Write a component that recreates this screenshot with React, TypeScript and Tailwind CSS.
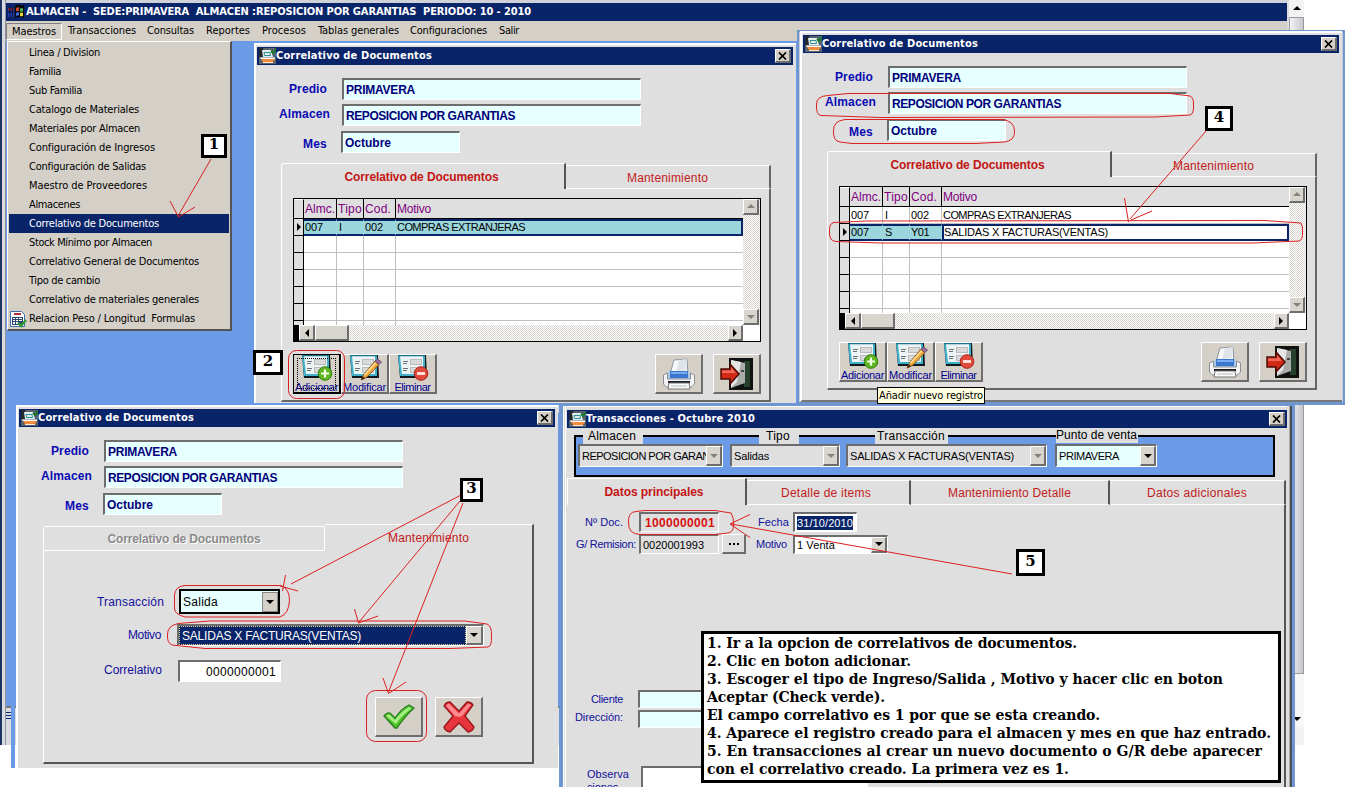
import { useLayoutEffect, useRef, type ReactNode } from "react";

/* Caption whose letter spacing is adjusted so that it spans a given width. */
function Fit({ w, className = "", children }: { w: number; className?: string; children: string }) {
  const ref = useRef<HTMLSpanElement>(null);
  useLayoutEffect(() => {
    const el = ref.current;
    if (!el) return;
    el.style.letterSpacing = "0px";
    const natural = el.getBoundingClientRect().width;
    el.style.letterSpacing = `${(w - natural) / children.length}px`;
  }, [w, children]);
  return (
    <span ref={ref} className={`inline-block shrink-0 whitespace-pre ${className}`}>
      {children}
    </span>
  );
}

const tahoma = "font-['DejaVu_Sans_Condensed','DejaVu_Sans',sans-serif]";
const arial = "font-['Liberation_Sans',Arial,sans-serif]";
const sunken = "border-t-2 border-l-2 border-b border-r border-t-[#6d6d6d] border-l-[#6d6d6d] border-b-white border-r-white";
const raised = "border-t border-l border-b-2 border-r-2 border-t-white border-l-white border-b-[#6d6d6d] border-r-[#6d6d6d]";
const dither = "bg-[repeating-conic-gradient(#ffffff_0_25%,#d8d5cf_0_50%)] bg-[length:2px_2px]";

/* ---------- icons ---------- */

function FormIcon() {
  return (
    <svg width="17" height="16" viewBox="0 0 17 16" className="shrink-0">
      <rect width="17" height="16" fill="#59616a" />
      <path d="M0 0h4l2 9H0z" fill="#23282e" />
      <path d="M3 2h9l2 7H4z" fill="#e3efee" />
      <path d="M5 4.500h6l.5 3h-6z" fill="none" stroke="#2d8f8f" />
      <path d="M12 3l2 2 3-4" stroke="#177a2b" strokeWidth="2" fill="none" />
      <path d="M1 9.500h15v1.500H2z" fill="#fff" />
      <path d="M2 11h14l-2 3H4z" fill="#f08a3c" />
      <path d="M4 14h10v1H4z" fill="#fbe9d8" />
    </svg>
  );
}

function FlagIcon() {
  return (
    <svg width="17" height="16" viewBox="0 0 17 16" className="shrink-0">
      <path d="M7 2q2-2 5-1 2 1 4 0v12q-2 1-4 0-3-1-5 1z" fill="#07070d" />
      <path d="M8 4q2-1 3-.5v3.500q-1-.5-3 .5z" fill="#d8452e" />
      <path d="M12 4q2 .7 3 0v3.500q-1 .5-3 0z" fill="#4fae45" />
      <path d="M8 9q2-1 3-.5v3q-1-.5-3 .5z" fill="#3b6fe0" />
      <path d="M12 8.500q2 .7 3 0v3.500q-1 .5-3 0z" fill="#e8d53a" />
      <path d="M0 4h6v3H0z" fill="#7b2340" />
      <path d="M0 9h6v4H0z" fill="#2a3fae" />
      <path d="M2 3v11M4.500 3v11" stroke="#0a1440" />
    </svg>
  );
}

function SheetCheckIcon() {
  return (
    <svg width="18" height="18" viewBox="0 0 18 18" className="shrink-0">
      <path d="M.5 1.500h11l3 3v12H.5z" fill="#fff" stroke="#3d6ea8" />
      <path d="M4 3h7v2H4z" fill="#b03030" />
      <path d="M2 7h11v8H2z" fill="#2d4770" />
      <path d="M3 8h2v1H3zM6 8h2v1H6zM9 8h3v1H9zM3 10h2v1H3zM6 10h2v1H6zM9 10h3v1H9zM3 12h2v2H3zM6 12h2v2H6z" fill="#fff" />
      <path d="M8 13l3 3 5-6" stroke="#2f9a35" strokeWidth="2.400" fill="none" />
    </svg>
  );
}

function RecordIcon({ kind }: { kind: "add" | "edit" | "remove" }) {
  return (
    <svg width="34" height="26" viewBox="0 0 34 26" className="shrink-0">
      <path d="M2 0h28l1 23H4z" fill="#10181e" />
      <path d="M2 0h27v21H4z" fill="#3fb0c8" />
      <path d="M4 1h23v18H6z" fill="#edf4f6" />
      <path d="M2 .5h27" stroke="#1b6f8e" strokeWidth="1.500" />
      <rect x="14.500" y="4.500" width="11" height="5" fill="#dadadb" stroke="#bbb" />
      <rect x="14.500" y="12.500" width="11" height="5" fill="#dadadb" stroke="#bbb" />
      <path d="M7 6.500h5M7 8.500h4M7 13.500h5M7 15.500h4" stroke="#6c7276" />
      {kind === "add" && (
        <g>
          <circle cx="25" cy="18.500" r="6.800" fill="#5fb61f" stroke="#2f7d0d" />
          <path d="M25 14.500v8M21 18.500h8" stroke="#f4ffe8" strokeWidth="2.200" />
        </g>
      )}
      {kind === "edit" && (
        <g>
          <path d="M13 25l3-6L27 6l4 3.500L19 22z" fill="#f2a93b" stroke="#7a4a10" strokeWidth=".8" />
          <path d="M16.500 20L27.500 8" stroke="#ffe1a0" strokeWidth="1.500" />
          <path d="M27 6l2.500-2 4 3L31 9.500z" fill="#9a6f9e" stroke="#5c4465" strokeWidth=".8" />
          <path d="M13 25l2-3.500 2 2z" fill="#2b1a0a" />
        </g>
      )}
      {kind === "remove" && (
        <g>
          <circle cx="25" cy="18.500" r="6.800" fill="#e0493c" stroke="#a82419" />
          <path d="M21 18.500h8" stroke="#ffe9e6" strokeWidth="2.800" />
        </g>
      )}
    </svg>
  );
}

function PrinterIcon() {
  return (
    <svg width="34" height="34" viewBox="0 0 34 34">
      <path d="M8 17L12 3l13-1 1 15z" fill="#f6f8fb" stroke="#8e949c" />
      <path d="M17 3l-3 12 10-2 1-11z" fill="#dfe3ea" />
      <path d="M7 14h20l2 9H5z" fill="#a9c8ee" />
      <path d="M8 14h18v7H8z" fill="#3a78d0" />
      <path d="M9 15h16v2H9z" fill="#78aef0" />
      <path d="M1.500 18l4-2v6h23v-6l4 2v9l-3 3h-25l-3-3z" fill="#f4f4f6" stroke="#8a8d94" />
      <path d="M6 24h22v2H6z" fill="#17181c" />
      <path d="M7 26h20l1 6H6z" fill="#fbfbfb" stroke="#777" />
      <path d="M9 29h16" stroke="#bbb" />
    </svg>
  );
}

function ExitIcon() {
  return (
    <svg width="34" height="34" viewBox="0 0 34 34">
      <path d="M9 1h24v32H9z" fill="#10120f" />
      <path d="M24 4h6v26h-6z" fill="#27402c" />
      <path d="M11 3l14 3v20l-14 5z" fill="#a9aca9" />
      <path d="M11 3l10 2-4 20-6 6z" fill="#e4e5e4" />
      <path d="M21 13h3v2h-3z" fill="#444" />
      <path d="M1 12h9V7l9 10-9 10v-5H1z" fill="#d22a17" stroke="#4d0c05" strokeWidth="1.500" />
      <path d="M2 13.500h9V10l5 6H2z" fill="#f0695a" />
    </svg>
  );
}

function CheckIcon() {
  return (
    <svg width="34" height="28" viewBox="0 0 34 28">
      <path d="M2 13q3-4 6-3l5 5q6-9 14-13l5 3Q23 13 15 25h-2z" fill="#4cc22b" stroke="#2b7d1d" strokeWidth="1.300" />
      <path d="M4 13q2-2 3.500-1.500L13 17q7-9 14-13l2.500 1.500Q20 12 14 21z" fill="#a9ee86" />
    </svg>
  );
}

function CrossIcon() {
  return (
    <svg width="34" height="34" viewBox="0 0 34 34">
      <path d="M2 6q2-4 6-4l9 9 8-9q4 0 6 3l-8 11 9 11q-1 4-6 5l-9-9-9 9q-5-1-6-5l9-11z" fill="#e8343c" stroke="#96141b" strokeWidth="1.300" />
      <path d="M4 6q1-2 3-2.500l10 10 9-10q2 0 3 1.500L20 16l-3 1-4-1z" fill="#f98a8d" />
    </svg>
  );
}

function Tri({ dir, dim }: { dir: "up" | "down" | "left" | "right"; dim?: boolean }) {
  const shape = {
    up: "M0 5h8L4 1z",
    down: "M0 2h8L4 6z",
    left: "M6 0v8L2 4z",
    right: "M2 0v8l4-4z",
  }[dir];
  return (
    <svg width="8" height="8" viewBox="0 0 8 8" className="shrink-0">
      <path d={shape} fill={dim ? "#85827c" : "#000"} />
    </svg>
  );
}

/* ---------- shared pieces ---------- */

function TitleBar({ text, w }: { text: string; w: number }) {
  return (
    <div className="flex h-[18px] shrink-0 items-center bg-[#0a246a] pl-[2px] pr-[2px]">
      <FormIcon />
      <Fit w={w} className={`text-[11px] leading-[16px] font-bold text-white ${tahoma}`}>{text}</Fit>
      <div className={`ml-auto flex h-[14px] w-[16px] items-center justify-center bg-[#d4d0c8] ${raised}`}>
        <svg width="9" height="8" viewBox="0 0 9 8">
          <path d="M1 .5l7 7M8 .5l-7 7" stroke="#000" strokeWidth="1.700" />
        </svg>
      </div>
    </div>
  );
}

function HeaderField({ label, lw, cell, value, vw, box }: { label: string; lw: number; cell: string; value: string; vw: number; box: string }) {
  return (
    <div className={`flex h-[22px] items-center ${arial}`}>
      <div className={`flex justify-end ${cell}`}>
        <Fit w={lw} className="text-[12px] leading-[14px] font-bold text-[#0a0ab4]">{label}</Fit>
      </div>
      <div className={`flex h-[22px] items-center bg-[#e6ffff] pl-[2px] ${sunken} ${box}`}>
        <Fit w={vw} className="text-[12px] leading-[14px] font-bold text-[#00007a]">{value}</Fit>
      </div>
    </div>
  );
}

function CorrelativoWindow({ className, children }: { className: string; children: ReactNode }) {
  return (
    <section className={`absolute w-[542px] overflow-hidden border-t-2 border-l-2 border-white bg-[#dfdfdf] pt-[2px] pl-px ${className}`}>
      <div className="w-[536px]">
        <TitleBar text="Correlativo de Documentos" w={156} />
      </div>
      <div className="mt-[13px] flex flex-col">
        <HeaderField label="Predio" lw={38} cell="w-[85px] pr-[15px]" value="PRIMAVERA" vw={69} box="w-[299px]" />
        <div className="mt-[4px]">
          <HeaderField label="Almacen" lw={51} cell="w-[85px] pr-[12px] pb-[3px]" value="REPOSICION POR GARANTIAS" vw={169} box="w-[299px]" />
        </div>
        <div className="mt-[5px]">
          <HeaderField label="Mes" lw={24} cell="w-[84px] pr-[14px] pt-[3px]" value="Octubre" vw={46} box="w-[119px]" />
        </div>
      </div>
      {children}
    </section>
  );
}

type Row = { almc: string; tipo: string; cod: string; motivo: string };

function ScrollButton({ dir, dim, className }: { dir: "up" | "down" | "left" | "right"; dim?: boolean; className: string }) {
  return (
    <div className={`flex shrink-0 items-center justify-center bg-[#d8d5cf] ${raised} ${className}`}>
      <Tri dir={dir} dim={dim} />
    </div>
  );
}

function GridTable({ rows, editing }: { rows: Row[]; editing?: boolean }) {
  const current = rows.length - 1;
  const all: (Row | null)[] = [...rows, ...Array<null>(7 - rows.length).fill(null)];
  const head = "flex h-full items-center border-r border-black pl-px";
  return (
    <div className={`flex h-[144px] w-[468px] flex-col border border-black bg-white ${arial}`}>
      <div className="flex h-[126px]">
        <div className="flex w-[449px] flex-col overflow-hidden">
          <div className="flex h-[20px] shrink-0 border-b border-black bg-[#dfdfdf] text-[12px] leading-[14px] text-[#800080]">
            <div className="w-[10px] border-t border-r border-t-white border-r-black" />
            <div className={`w-[33px] ${head}`}><Fit w={30}>Almc.</Fit></div>
            <div className={`w-[27px] ${head}`}><Fit w={24}>Tipo</Fit></div>
            <div className={`w-[32px] ${head}`}><Fit w={26}>Cod.</Fit></div>
            <div className="flex flex-1 items-center pl-px"><Fit w={34}>Motivo</Fit></div>
          </div>
          {all.map((row, i) => {
            const on = i === current;
            const tint = on ? "border-y-2 border-y-[#0a246a] bg-[#9bd6dc]" : "border-b border-b-[#c0c0c0]";
            const cell = `flex items-center border-r pl-px ${on ? "border-r-[#9bd6dc]" : "border-r-[#c0c0c0]"} ${tint}`;
            const wide = on && editing ? "border-2 border-[#0a246a] bg-white" : on ? `border-r-2 border-r-[#0a246a] pl-px ${tint}` : `pl-px ${tint}`;
            return (
              <div key={i} className="flex h-[17px] shrink-0 text-[11px] leading-[13px] text-black">
                <div className="flex w-[10px] items-center justify-end border-r border-b border-black bg-[#dfdfdf]">
                  {on && <Tri dir="right" />}
                </div>
                <div className={`w-[33px] ${cell}`}>{row && <Fit w={18}>{row.almc}</Fit>}</div>
                <div className={`w-[27px] ${cell}`}>{row && <span className="ml-px">{row.tipo}</span>}</div>
                <div className={`w-[32px] ${cell}`}>{row && <Fit w={18}>{row.cod}</Fit>}</div>
                <div className={`flex flex-1 items-center ${wide}`}>
                  {row && <Fit w={on && editing ? 164 : 128}>{row.motivo}</Fit>}
                </div>
              </div>
            );
          })}
        </div>
        <div className={`flex w-[17px] flex-col justify-between ${dither}`}>
          <ScrollButton dir="up" dim className="h-[16px] w-[16px]" />
          <ScrollButton dir="down" dim className="h-[16px] w-[16px]" />
        </div>
      </div>
      <div className="flex h-[16px]">
        <div className="w-[5px] bg-black" />
        <div className={`flex w-[444px] ${dither}`}>
          <ScrollButton dir="left" className="h-[16px] w-[16px]" />
          <div className={`h-[16px] w-[34px] bg-[#d8d5cf] ${raised}`} />
          <ScrollButton dir="right" className="ml-auto h-[16px] w-[15px]" />
        </div>
      </div>
    </div>
  );
}

function ToolButton({ kind, label, w, focused }: { kind: "add" | "edit" | "remove"; label: string; w: number; focused?: boolean }) {
  return (
    <div className={`relative flex h-[40px] w-[48px] flex-col items-center bg-[#d4d0c8] ${focused ? "border-t border-r-2 border-b-2 border-l border-black" : raised}`}>
      {focused && <div className="absolute inset-x-[3px] top-[3px] bottom-[3px] border border-dotted border-black" />}
      <RecordIcon kind={kind} />
      <Fit w={w} className={`text-[11px] leading-[12px] text-[#000090] ${arial}`}>{label}</Fit>
    </div>
  );
}

function IconButton({ children }: { children: ReactNode }) {
  return <div className={`flex h-[40px] w-[48px] items-center justify-center bg-[#d4d0c8] ${raised}`}>{children}</div>;
}

function ListPanel({ rows, editing, focused }: { rows: Row[]; editing?: boolean; focused?: boolean }) {
  return (
    <div className={`mt-[10px] ml-[24px] w-[490px] ${arial}`}>
      <div className="flex h-[26px]">
        <div className="flex w-[285px] items-center justify-center rounded-tl-[3px] border-t border-l border-r-2 border-t-white border-l-white border-r-[#555] pr-[3px]">
          <Fit w={154} className="text-[12px] leading-[14px] font-bold text-[#c41414]">Correlativo de Documentos</Fit>
        </div>
        <div className="mt-[2px] flex flex-1 items-center justify-center border-t border-r-2 border-b border-t-white border-r-[#666] border-b-white pt-[2px]">
          <Fit w={81} className="text-[12px] leading-[14px] text-[#c22020]">Mantenimiento</Fit>
        </div>
      </div>
      <div className="flex h-[213px] flex-col border-r-2 border-b-2 border-l border-l-white border-r-[#666] border-b-[#666] pt-[9px] pl-[11px]">
        <GridTable rows={rows} editing={editing} />
        <div className="mt-[12px] flex w-[468px]">
          <ToolButton kind="add" label="Adicionar" w={43} focused={focused} />
          <ToolButton kind="edit" label="Modificar" w={43} />
          <ToolButton kind="remove" label="Eliminar" w={36} />
          <div className="ml-auto flex gap-[10px]">
            <IconButton><PrinterIcon /></IconButton>
            <IconButton><ExitIcon /></IconButton>
          </div>
        </div>
      </div>
    </div>
  );
}

function FormLabel({ text, w, cell, small }: { text: string; w: number; cell: string; small?: boolean }) {
  return (
    <div className={`flex shrink-0 justify-end ${cell}`}>
      <Fit w={w} className={`leading-[14px] text-[#10109c] ${small ? "text-[11px]" : "text-[12px]"} ${arial}`}>{text}</Fit>
    </div>
  );
}

function EditPanel() {
  return (
    <div className={`mt-[9px] ml-[24px] w-[491px] ${arial}`}>
      <div className="flex h-[27px]">
        <div className="mt-[2px] flex w-[282px] items-center justify-center rounded-tl-[3px] border border-white">
          <Fit w={153} className="text-[12px] leading-[14px] font-bold text-[#8a8a8a] [text-shadow:1px_1px_0_white]">Correlativo de Documentos</Fit>
        </div>
        <div className="flex flex-1 items-center justify-center border-t border-r-2 border-t-white border-r-[#555]">
          <Fit w={81} className="text-[12px] leading-[14px] text-[#c22020]">Mantenimiento</Fit>
        </div>
      </div>
      <div className="flex h-[213px] flex-col border-r-2 border-b-2 border-l border-l-white border-r-[#555] border-b-[#555] pt-[38px]">
        <div className="flex h-[25px] items-center">
          <FormLabel text="Transacción" w={67} cell="w-[135px] pr-[15px]" />
          <div className="flex h-[25px] w-[101px] items-center border-2 border-black bg-[#e6ffff] pl-[2px]">
            <Fit w={35} className="text-[12px] leading-[14px] text-black">Salida</Fit>
            <div className="ml-auto flex h-[20px] w-[16px] items-center justify-center border border-[#888] bg-[#d4d0c8]">
              <Tri dir="down" />
            </div>
          </div>
        </div>
        <div className="mt-[10px] flex h-[22px] items-center">
          <FormLabel text="Motivo" w={33} cell="w-[133px] pr-[16px]" />
          <div className={`flex h-[22px] w-[307px] bg-white ${sunken}`}>
            <div className="flex flex-1 items-center border border-dotted border-[#e8d890] bg-[#0a246a] pl-[2px]">
              <Fit w={179} className="text-[12px] leading-[14px] text-white">SALIDAS X FACTURAS(VENTAS)</Fit>
            </div>
            <ScrollButton dir="down" className="h-[19px] w-[17px]" />
          </div>
        </div>
        <div className="mt-[14px] flex h-[22px] items-center">
          <FormLabel text="Correlativo" w={58} cell="w-[134px] pr-[16px] pb-[2px]" />
          <div className={`flex h-[22px] w-[103px] items-center justify-end bg-white pr-[4px] ${sunken}`}>
            <Fit w={70} className="text-[12px] leading-[14px] text-black">0000000001</Fit>
          </div>
        </div>
        <div className="mt-[15px] ml-[331px] flex gap-[12px]">
          <IconButton><CheckIcon /></IconButton>
          <IconButton><CrossIcon /></IconButton>
        </div>
      </div>
    </div>
  );
}

/* ---------- main application window ---------- */

const menus: [string, number, string][] = [
  ["Transacciones", 68, "w-[79px]"],
  ["Consultas", 47, "w-[59px]"],
  ["Reportes", 44, "w-[56px]"],
  ["Procesos", 44, "w-[56px]"],
  ["Tablas generales", 81, "w-[92px]"],
  ["Configuraciones", 77, "w-[89px]"],
  ["Salir", 20, "w-[32px]"],
];

const entries: [string, number][] = [
  ["Linea / Division", 71],
  ["Familia", 32],
  ["Sub Familia", 53],
  ["Catalogo de Materiales", 110],
  ["Materiales por Almacen", 111],
  ["Configuración de Ingresos", 126],
  ["Configuración de Salidas", 117],
  ["Maestro de Proveedores", 118],
  ["Almacenes", 51],
  ["Correlativo de Documentos", 130],
  ["Stock Mínimo por Almacen", 123],
  ["Correlativo General de Documentos", 170],
  ["Tipo de cambio", 71],
  ["Correlativo de materiales generales", 170],
  ["Relacion Peso / Longitud  Formulas", 166],
];

function MainWindow() {
  return (
    <div className={`absolute top-0 left-0 flex h-[745px] w-[1304px] ${tahoma}`}>
      <div className="w-[2px] bg-[#1c3560]" />
      <div className="w-[4px] border-r border-[#8f9299] bg-[#d9dbe0]" />
      <div className="flex w-[1281px] flex-col border-t-[3px] border-[#cfd2d8]">
        <div className="flex h-[18px] shrink-0 items-center bg-[#0a246a] pl-[2px]">
          <FlagIcon />
          <Fit w={505} className="ml-px text-[11px] leading-[16px] font-bold text-white">
            {"ALMACEN -  SEDE:PRIMAVERA  ALMACEN :REPOSICION POR GARANTIAS  PERIODO: 10 - 2010"}
          </Fit>
        </div>
        <div className="flex h-[20px] shrink-0 items-center bg-[#d4d0c8] text-[11px] leading-[14px]">
          <div className="mr-[6px] flex h-[17px] w-[56px] items-center border border-t-[#808080] border-r-white border-b-white border-l-[#808080] pt-[2px] pl-[5px]">
            <Fit w={44}>Maestros</Fit>
          </div>
          {menus.map(([name, w, cell]) => (
            <div key={name} className={`shrink-0 ${cell}`}>
              <Fit w={w}>{name}</Fit>
            </div>
          ))}
        </div>
        <div className="flex-1 bg-[#6b9ae7]" />
        <div className="h-[39px] border-t-2 border-[#777] bg-[#d9dbe0]">
          <div className="mt-[4px] flex w-[5px] flex-col gap-[2px]">
            <div className="h-px bg-[#0a246a]" />
            <div className="h-px bg-[#0a246a]" />
            <div className="h-px bg-[#0a246a]" />
          </div>
        </div>
      </div>
      <div className="flex w-[17px] flex-col items-center border-l-2 border-[#dcdcdc] bg-[#f2f2f2]">
        <div className="flex h-[17px] items-center"><Tri dir="up" /></div>
        <div className="h-[657px] w-full border border-[#9a9aa0] bg-gradient-to-r from-[#f4f4f6] to-[#c6c6cc]" />
        <div className="flex h-[53px] w-full items-end justify-center bg-[#f7f7f7] pb-[4px]"><Tri dir="down" /></div>
      </div>
    </div>
  );
}

function MaestrosMenu() {
  return (
    <div className={`absolute top-[41px] left-[7px] h-[290px] w-[225px] border-t border-r-2 border-b-2 border-l border-t-white border-r-[#555] border-b-[#555] border-l-white bg-[#d4d0c8] p-px text-[11px] leading-[14px] ${tahoma}`}>
      {entries.map(([name, w], i) => (
        <div key={name} className={`flex h-[19px] w-[220px] items-center ${i === 9 ? "bg-[#0a246a] text-white" : "text-black"}`}>
          <div className="flex w-[20px] shrink-0 pl-px">{i === 14 && <SheetCheckIcon />}</div>
          <Fit w={w}>{name}</Fit>
        </div>
      ))}
    </div>
  );
}

/* ---------- transactions window ---------- */

function Combo({ text, w, box, off }: { text: string; w: number; box: string; off?: boolean }) {
  return (
    <div className={`flex h-[23px] shrink-0 ${off ? "bg-[#dfdfdf]" : "bg-[#e6ffff]"} ${sunken} ${box}`}>
      <div className="flex min-w-0 flex-1 items-center overflow-hidden pl-[2px]">
        <Fit w={w} className="text-[11px] leading-[14px] text-black">{text}</Fit>
      </div>
      <ScrollButton dir="down" dim={off} className="h-[20px] w-[16px]" />
    </div>
  );
}

function Legend({ text, w, className }: { text: string; w: number; className: string }) {
  return (
    <div className={`absolute flex h-[13px] items-start bg-[#dfdfdf] ${className}`}>
      <Fit w={w} className="text-[12px] leading-[11px] text-black">{text}</Fit>
    </div>
  );
}

function TransaccionesWindow() {
  const tab = "mt-[2px] flex items-center justify-center border-t border-b border-t-white border-b-white border-r-2 border-r-[#555]";
  return (
    <section className={`absolute top-[403px] left-[559px] h-[384px] w-[736px] overflow-hidden border-t-[3px] border-r-[3px] border-l-[4px] border-[#6f96d2] bg-[#dfdfdf] ${arial}`}>
      <div className="flex h-full">
        <div className="mr-px w-[3px] shrink-0 border-r border-l border-white" />
        <div className="flex w-[720px] flex-col border-t border-white pt-[3px]">
          <TitleBar text="Transacciones - Octubre 2010" w={169} />
          <div className="relative mt-[7px] ml-[7px] flex h-[42px] w-[701px] shrink-0 border-2 border-black bg-[#6b9ae7] pt-[7px] pl-[2px]">
            <Legend text="Almacen" w={48} className="-top-[6px] left-[7px] w-[60px] pl-[5px]" />
            <Legend text="Tipo" w={24} className="-top-[6px] left-[183px] w-[40px] pl-[7px]" />
            <Legend text="Transacción" w={68} className="-top-[6px] left-[299px] w-[73px] pl-[2px]" />
            <Legend text="Punto de venta" w={81} className="-top-[7px] left-[480px] w-[82px]" />
            <Combo text="REPOSICION POR GARANTIAS" w={150} box="w-[145px]" off />
            <div className="w-[7px] shrink-0" />
            <Combo text="Salidas" w={35} box="w-[110px]" off />
            <div className="w-[6px] shrink-0" />
            <Combo text="SALIDAS X FACTURAS(VENTAS)" w={164} box="w-[201px]" off />
            <div className="w-[8px] shrink-0" />
            <Combo text="PRIMAVERA" w={60} box="w-[102px]" />
          </div>
          <div className="mt-px flex h-[27px] shrink-0 text-[12px] leading-[14px] text-[#c22020]">
            <div className="flex w-[180px] items-center justify-center border-t border-r-2 border-l border-t-white border-r-[#555] border-l-white pr-[5px]">
              <Fit w={99} className="font-bold text-[#c41414]">Datos principales</Fit>
            </div>
            <div className={`w-[164px] pr-[4px] ${tab}`}><Fit w={90}>Detalle de items</Fit></div>
            <div className={`w-[199px] ${tab}`}><Fit w={123}>Mantenimiento Detalle</Fit></div>
            <div className={`w-[176px] ${tab}`}><Fit w={100}>Datos adicionales</Fit></div>
          </div>
          <div className="w-[719px] flex-1 border-r-2 border-[#555] pt-[7px]">
            <div className="flex h-[20px] items-center">
              <FormLabel small text="Nº Doc." w={38} cell="w-[72px] pr-[16px]" />
              <div className={`flex h-[20px] w-[80px] items-center pl-[4px] ${sunken}`}>
                <Fit w={70} className="text-[12px] leading-[14px] font-bold text-[#d81010]">1000000001</Fit>
              </div>
              <FormLabel small text="Fecha" w={31} cell="w-[74px] pr-[4px]" />
              <div className={`flex h-[20px] w-[64px] items-center bg-white pl-[2px] ${sunken}`}>
                <Fit w={56} className="bg-[#0a246a] text-[11px] leading-[14px] text-white">31/10/2010</Fit>
              </div>
            </div>
            <div className="mt-[2px] flex h-[20px] items-center">
              <FormLabel small text="G/ Remision:" w={60} cell="w-[72px] pr-[3px]" />
              <div className={`flex h-[20px] w-[80px] items-center pl-[2px] ${sunken}`}>
                <Fit w={61} className="text-[11px] leading-[14px] text-black">0020001993</Fit>
              </div>
              <div className={`ml-[3px] flex h-[20px] w-[24px] items-center justify-center gap-[2px] bg-[#dfdfdf] ${raised}`}>
                <span className="size-[2px] bg-black" />
                <span className="size-[2px] bg-black" />
                <span className="size-[2px] bg-black" />
              </div>
              <FormLabel small text="Motivo" w={31} cell="w-[47px] pr-[6px]" />
              <div className={`flex h-[19px] w-[95px] items-center bg-white pl-[2px] ${sunken}`}>
                <Fit w={38} className="text-[11px] leading-[14px] text-black">1 Venta</Fit>
                <ScrollButton dir="down" className="ml-auto h-[16px] w-[16px]" />
              </div>
            </div>
            <div className="mt-[136px] flex h-[18px] items-center">
              <FormLabel small text="Cliente" w={32} cell="w-[71px] pr-[15px]" />
              <div className={`h-[18px] w-[300px] bg-[#e6ffff] ${sunken}`} />
            </div>
            <div className="mt-[2px] flex h-[18px] items-center">
              <FormLabel small text="Dirección:" w={48} cell="w-[71px] pr-[15px] pb-[4px]" />
              <div className={`h-[18px] w-[300px] bg-[#e6ffff] ${sunken}`} />
            </div>
            <div className="mt-[38px] flex">
              <div className="flex w-[74px] flex-col items-start pt-[2px] pl-[20px] text-[11px] leading-[13px] text-[#10109c]">
                <Fit w={42}>Observa</Fit>
                <Fit w={31}>ciones</Fit>
              </div>
              <div className={`h-[40px] w-[227px] bg-white ${sunken}`} />
            </div>
          </div>
        </div>
        <div className="ml-[2px] w-[3px] border-r-2 border-l border-r-[#4a4f5c] border-l-[#aaa]" />
      </div>
    </section>
  );
}

/* ---------- annotations ---------- */

function Callout({ n, className }: { n: string; className: string }) {
  return (
    <div className={`absolute flex items-center justify-center border-[3px] border-black bg-white pb-[3px] font-['DejaVu_Serif',serif] text-[15px] leading-none font-bold text-black ${className}`}>
      {n}
    </div>
  );
}

function RedMarks() {
  return (
    <svg width="1366" height="787" viewBox="0 0 1366 787" className="pointer-events-none absolute top-0 left-0" fill="none" stroke="#dc2020" strokeWidth="1">
      <path d="M211 159L178 216M170 201L178.500 217L195 207" />
      <rect x="288.500" y="350.500" width="56" height="48" rx="8" />
      <path d="M828 95.500L848 93.500H1170L1190 96Q1194 98 1193.500 105Q1194 114 1190 115L1155 117L880 117.500L821 115.500Q816 115 816.500 105Q816 96 828 95.500z" />
      <path d="M845 119.500H1002Q1014.500 121 1014.500 131Q1015 141 1004 142L975 143.500H852L840 142Q833 141 833.500 131Q833 121 845 119.500z" />
      <path d="M866 221L1264 220.500L1301 223Q1303 226 1302.500 232Q1303 240 1299 241L1253 243H880L836 241.500Q829 241 829.500 232Q829 223 834 222.500z" />
      <path d="M1206 131L1130 219M1124.500 198L1128.500 222M1131 220L1152 211" />
      <path d="M463 494L291 584M285.500 575L282.500 591M280 586L298 591" />
      <path d="M460 501L359 622M354.500 609L358.500 623L378 616" />
      <path d="M463 503L388.500 692M383 678L388.500 693.500L406 682" />
      <path d="M184 585.500H281Q289.500 589 289.500 600Q289 614 280 617H185Q174 614 174.500 608V595Q175 587 184 585.500z" />
      <path d="M178 623.500L210 621H465L487 624Q492 626 491.500 636Q492 646 488 647L450 648.500H205L172 645Q167 643 167.500 635Q167 626 178 623.500z" />
      <rect x="366.500" y="690.500" width="60" height="51" rx="9" />
      <path d="M636 511.500L645 510.500H715L731 513Q734 518 733.500 524Q734 532 728 533L715 534.500H640Q628 534 628.500 522Q628 512 636 511.500z" />
      <path d="M731 524L1012 574M750 514.500L730 524L750 537.500" />
    </svg>
  );
}

const notes: [string, number][] = [
  ["1. Ir a la opcion de correlativos de documentos.", 370],
  ["2. Clic en boton adicionar.", 204],
  ["3. Escoger el tipo de Ingreso/Salida , Motivo y hacer clic en boton", 516],
  ["Aceptar (Check verde).", 178],
  ["El campo correlativo es 1 por que se esta creando.", 393],
  ["4. Aparece el registro creado para el almacen y mes en que haz entrado.", 564],
  ["5. En transacciones al crear un nuevo documento o G/R debe aparecer", 555],
  ["con el correlativo creado. La primera vez es 1.", 362],
];

function Notes() {
  return (
    <div className="absolute top-[631px] left-[701px] flex h-[152px] w-[580px] flex-col border-[3px] border-black bg-white pl-[3px] font-['DejaVu_Serif',serif] text-[14px] leading-[18px] font-bold text-black">
      {notes.map(([line, w]) => (
        <div key={line} className="flex h-[18px] shrink-0">
          <Fit w={w}>{line}</Fit>
        </div>
      ))}
    </div>
  );
}

export default function App() {
  return (
    <main className="relative h-[787px] w-[1366px] overflow-hidden bg-white">
      <MainWindow />
      <CorrelativoWindow className="top-[43px] left-[254px] h-[370px]">
        <ListPanel focused rows={[{ almc: "007", tipo: "I", cod: "002", motivo: "COMPRAS EXTRANJERAS" }]} />
      </CorrelativoWindow>
      <MaestrosMenu />
      <div className="absolute top-[403px] left-[11px] h-[365px] w-[549px] border-t-2 border-l-[4px] border-[#6b9ae7]" />
      <CorrelativoWindow className="top-[405px] left-[16px] h-[363px]">
        <EditPanel />
      </CorrelativoWindow>
      <TransaccionesWindow />
      <div className="absolute top-[30px] left-[797px] h-[375px] w-[548px] border-t-2 border-r-2 border-b-[3px] border-l-2 border-[#7096cf] bg-[#c8ccd4]" />
      <CorrelativoWindow className="top-[31px] left-[800px] h-[371px] border-b-2 border-b-[#777]">
        <ListPanel
          editing
          rows={[
            { almc: "007", tipo: "I", cod: "002", motivo: "COMPRAS EXTRANJERAS" },
            { almc: "007", tipo: "S", cod: "Y01", motivo: "SALIDAS X FACTURAS(VENTAS)" },
          ]}
        />
      </CorrelativoWindow>
      <div className={`absolute top-[387px] left-[877px] flex h-[17px] w-[108px] items-center border border-black bg-[#ffffe1] pl-px text-[11px] leading-[13px] text-black ${tahoma}`}>
        <Fit w={104}>Añadir nuevo registro</Fit>
      </div>
      <Notes />
      <RedMarks />
      <Callout n="1" className="top-[134px] left-[201px] h-[24px] w-[26px]" />
      <Callout n="2" className="top-[350px] left-[253px] h-[25px] w-[30px]" />
      <Callout n="3" className="top-[478px] left-[460px] h-[24px] w-[23px]" />
      <Callout n="4" className="top-[106px] left-[1205px] h-[25px] w-[28px]" />
      <Callout n="5" className="top-[549px] left-[1016px] h-[27px] w-[29px]" />
    </main>
  );
}
